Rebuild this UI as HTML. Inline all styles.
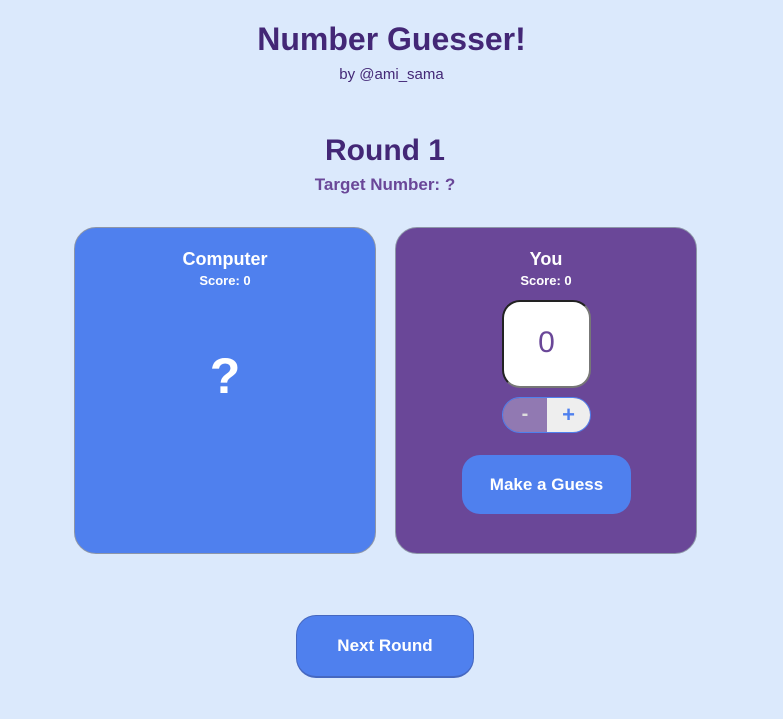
<!DOCTYPE html>
<html><head><meta charset="utf-8"><style>
*{margin:0;padding:0;box-sizing:border-box}
body{width:783px;height:719px;background:#dbe9fc;font-family:"Liberation Sans",sans-serif;position:relative;overflow:hidden}
.a{position:absolute;text-align:center}
.card{position:absolute;top:227px;width:302px;height:327px;border-radius:22px;border:1px solid #8d96a8}
.w{color:#fff;font-weight:bold;position:absolute;left:0;width:100%;text-align:center}
</style></head><body>
<div class="a" style="left:0;width:783px;top:21px;font-size:32px;font-weight:bold;color:#432776">Number Guesser!</div>
<div class="a" style="left:0;width:783px;top:66px;font-size:15px;color:#432776">by @ami_sama</div>
<div class="a" style="left:0;width:770px;top:134px;font-size:30px;font-weight:bold;color:#432776">Round 1</div>
<div class="a" style="left:0;width:770px;top:175px;font-size:17px;font-weight:bold;color:#6a4798">Target Number: ?</div>

<div class="card" style="left:74px;background:#4f80ee">
 <div class="w" style="top:21px;font-size:18px">Computer</div>
 <div class="w" style="top:45px;font-size:13px">Score: 0</div>
 <div class="w" style="top:119px;font-size:50px">?</div>
</div>
<div class="card" style="left:395px;background:#6a4798">
 <div class="w" style="top:21px;font-size:18px">You</div>
 <div class="w" style="top:45px;font-size:13px">Score: 0</div>
 <div style="position:absolute;left:106px;top:72px;width:89px;height:88px;background:#fff;border-radius:18px;border:2px solid;border-color:#222 #777 #777 #222;color:#6a4798;font-size:30px;text-align:center;line-height:82px">0</div>
 <div style="position:absolute;left:106px;top:169px;width:89px;height:36px;border-radius:18px;border:1px solid #4f80ee;overflow:hidden;display:flex">
  <div style="width:44px;background:#9179b2;color:#ddd;font-weight:bold;font-size:20px;text-align:center;line-height:33px">-</div>
  <div style="flex:1;background:#eee;color:#4f80ee;font-weight:bold;font-size:22px;text-align:center;line-height:33px">+</div>
 </div>
 <div style="position:absolute;left:66px;top:227px;width:169px;height:59px;border-radius:18px;background:#4f80ee;color:#fff;font-weight:bold;font-size:17px;text-align:center;line-height:59px">Make a Guess</div>
</div>
<div style="position:absolute;left:296px;top:615px;width:178px;height:63px;border-radius:20px;background:#4f80ee;border:1px solid #4668c0;border-bottom-width:2px;color:#fff;font-weight:bold;font-size:17px;text-align:center;line-height:60px">Next Round</div>
</body></html>
